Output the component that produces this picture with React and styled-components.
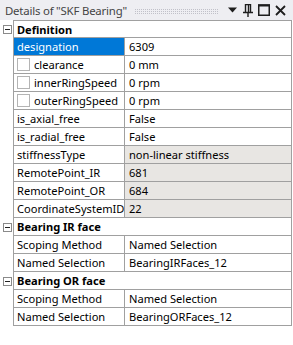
import React from 'react'
import styled, { createGlobalStyle } from 'styled-components'

const GlobalStyle = createGlobalStyle`
  html, body { margin: 0; padding: 0; background: #ffffff; }
  body { font-family: "Noto Sans", "Open Sans", sans-serif; }
`

const Panel = styled.div`
  width: 293px;
  height: 345px;
  background: #ffffff;
  display: flex;
  flex-direction: column;
  overflow: hidden;
`

const TitleBar = styled.div`
  height: 20px;
  background: #eeeef2;
  display: flex;
  align-items: center;
  padding: 0 7px 0 5px;
  gap: 5px;
`

const Title = styled.span`
  font-size: 11.4px;
  letter-spacing: -0.2px;
  color: #444444;
  white-space: nowrap;
`

const Grip = styled.div`
  flex: 1;
  height: 6px;
  margin: 1px 3px 0 2px;
  background-image:
    linear-gradient(90deg, #eeeef2 1px, transparent 1px),
    linear-gradient(#eeeef2 1px, transparent 1px);
  background-color: #b6b6c0;
  background-size: 2px 2px;
  opacity: 0.8;
`

const TitleIcons = styled.div`
  display: flex;
  align-items: center;
  gap: 4px;
`

const IconBtn = styled.span`
  width: 12px;
  height: 14px;
  display: flex;
  align-items: center;
  justify-content: center;
`

const Tree = styled.div`
  display: flex;
  flex-direction: column;
  padding-right: 1px;
`

const Row = styled.div`
  display: flex;
  height: 18px;
`

const Gutter = styled.div`
  width: 13px;
  flex: none;
  display: flex;
  align-items: center;
  padding-left: 3px;
  box-sizing: border-box;
  ${(p) => p.$first && 'margin-top: 1px;'}
`

const Collapse = styled.span`
  width: 9px;
  height: 9px;
  box-sizing: border-box;
  border: 1px solid #8a8a8a;
  background: #ffffff;
  position: relative;
  &::after {
    content: '';
    position: absolute;
    left: 1px;
    right: 1px;
    top: 3px;
    height: 1px;
    background: #222222;
  }
`

const Body = styled.div`
  flex: 1;
  display: flex;
  box-sizing: border-box;
  border-left: 1px solid #a0a0a0;
  border-right: 1px solid #a0a0a0;
  border-bottom: 1px solid #a0a0a0;
  ${(p) => p.$first && 'border-top: 1px solid #a0a0a0;'}
  font-size: 11.1px;
  color: #000000;
`

const GroupLabel = styled.div`
  flex: 1;
  display: flex;
  align-items: center;
  padding-left: 3px;
  font-weight: 700;
  background: #ffffff;
`

const Name = styled.div`
  width: 111px;
  flex: none;
  display: flex;
  align-items: center;
  gap: 4px;
  padding-left: 3px;
  box-sizing: border-box;
  border-right: 1px solid #a0a0a0;
  white-space: nowrap;
  overflow: hidden;
  background: ${(p) => (p.$selected ? '#0078d7' : '#ffffff')};
  color: ${(p) => (p.$selected ? '#ffffff' : '#000000')};
`

const Value = styled.div`
  flex: 1;
  display: flex;
  align-items: center;
  padding-left: 4px;
  white-space: nowrap;
  background: ${(p) => (p.$readonly ? '#e8e6e3' : '#ffffff')};
`

const Check = styled.span`
  width: 13px;
  height: 13px;
  box-sizing: border-box;
  border: 1px solid #b4b4b4;
  background: #ffffff;
  flex: none;
`

const rows = [
  { group: 'Definition' },
  { name: 'designation', value: '6309', selected: true },
  { name: 'clearance', value: '0 mm', check: true },
  { name: 'innerRingSpeed', value: '0 rpm', check: true },
  { name: 'outerRingSpeed', value: '0 rpm', check: true },
  { name: 'is_axial_free', value: 'False' },
  { name: 'is_radial_free', value: 'False' },
  { name: 'stiffnessType', value: 'non-linear stiffness', readonly: true },
  { name: 'RemotePoint_IR', value: '681', readonly: true },
  { name: 'RemotePoint_OR', value: '684', readonly: true },
  { name: 'CoordinateSystemID', value: '22', readonly: true },
  { group: 'Bearing IR face' },
  { name: 'Scoping Method', value: 'Named Selection' },
  { name: 'Named Selection', value: 'BearingIRFaces_12' },
  { group: 'Bearing OR face' },
  { name: 'Scoping Method', value: 'Named Selection' },
  { name: 'Named Selection', value: 'BearingORFaces_12' },
]

const DropIcon = () => (
  <svg width="9" height="6" viewBox="0 0 9 6">
    <path d="M0 0.5h9L4.5 5.5z" fill="#1e1e1e" />
  </svg>
)

const PinIcon = () => (
  <svg width="10" height="13" viewBox="0 0 10 13">
    <path d="M2.5 0.5h5v8h-5z M0 8.5h10 M5 8.5v4.5" fill="none" stroke="#1e1e1e" strokeWidth="1.4" />
    <path d="M5.5 1v7" stroke="#1e1e1e" strokeWidth="1.4" />
  </svg>
)

const MaxIcon = () => (
  <svg width="12" height="12" viewBox="0 0 12 12">
    <rect x="0.75" y="1" width="10.5" height="10.25" fill="none" stroke="#1e1e1e" strokeWidth="1.5" />
    <path d="M0 1.5h12" stroke="#1e1e1e" strokeWidth="2" />
  </svg>
)

const CloseIcon = () => (
  <svg width="11" height="11" viewBox="0 0 11 11">
    <path d="M1 1l9 9M10 1l-9 9" stroke="#1e1e1e" strokeWidth="1.8" />
  </svg>
)

const App = () => {
  return (
    <Panel>
      <GlobalStyle />
      <TitleBar>
        <Title>Details of "SKF Bearing"</Title>
        <Grip />
        <TitleIcons>
          <IconBtn><DropIcon /></IconBtn>
          <IconBtn><PinIcon /></IconBtn>
          <IconBtn><MaxIcon /></IconBtn>
          <IconBtn><CloseIcon /></IconBtn>
        </TitleIcons>
      </TitleBar>
      <Tree>
        {rows.map((r, i) => (
          <Row key={i}>
            <Gutter $first={i === 0}>{r.group && <Collapse />}</Gutter>
            <Body $first={i === 0}>
              {r.group ? (
                <GroupLabel>{r.group}</GroupLabel>
              ) : (
                <>
                  <Name $selected={r.selected}>
                    {r.check && <Check />}
                    {r.name}
                  </Name>
                  <Value $readonly={r.readonly}>{r.value}</Value>
                </>
              )}
            </Body>
          </Row>
        ))}
      </Tree>
    </Panel>
  )
}

export default App
